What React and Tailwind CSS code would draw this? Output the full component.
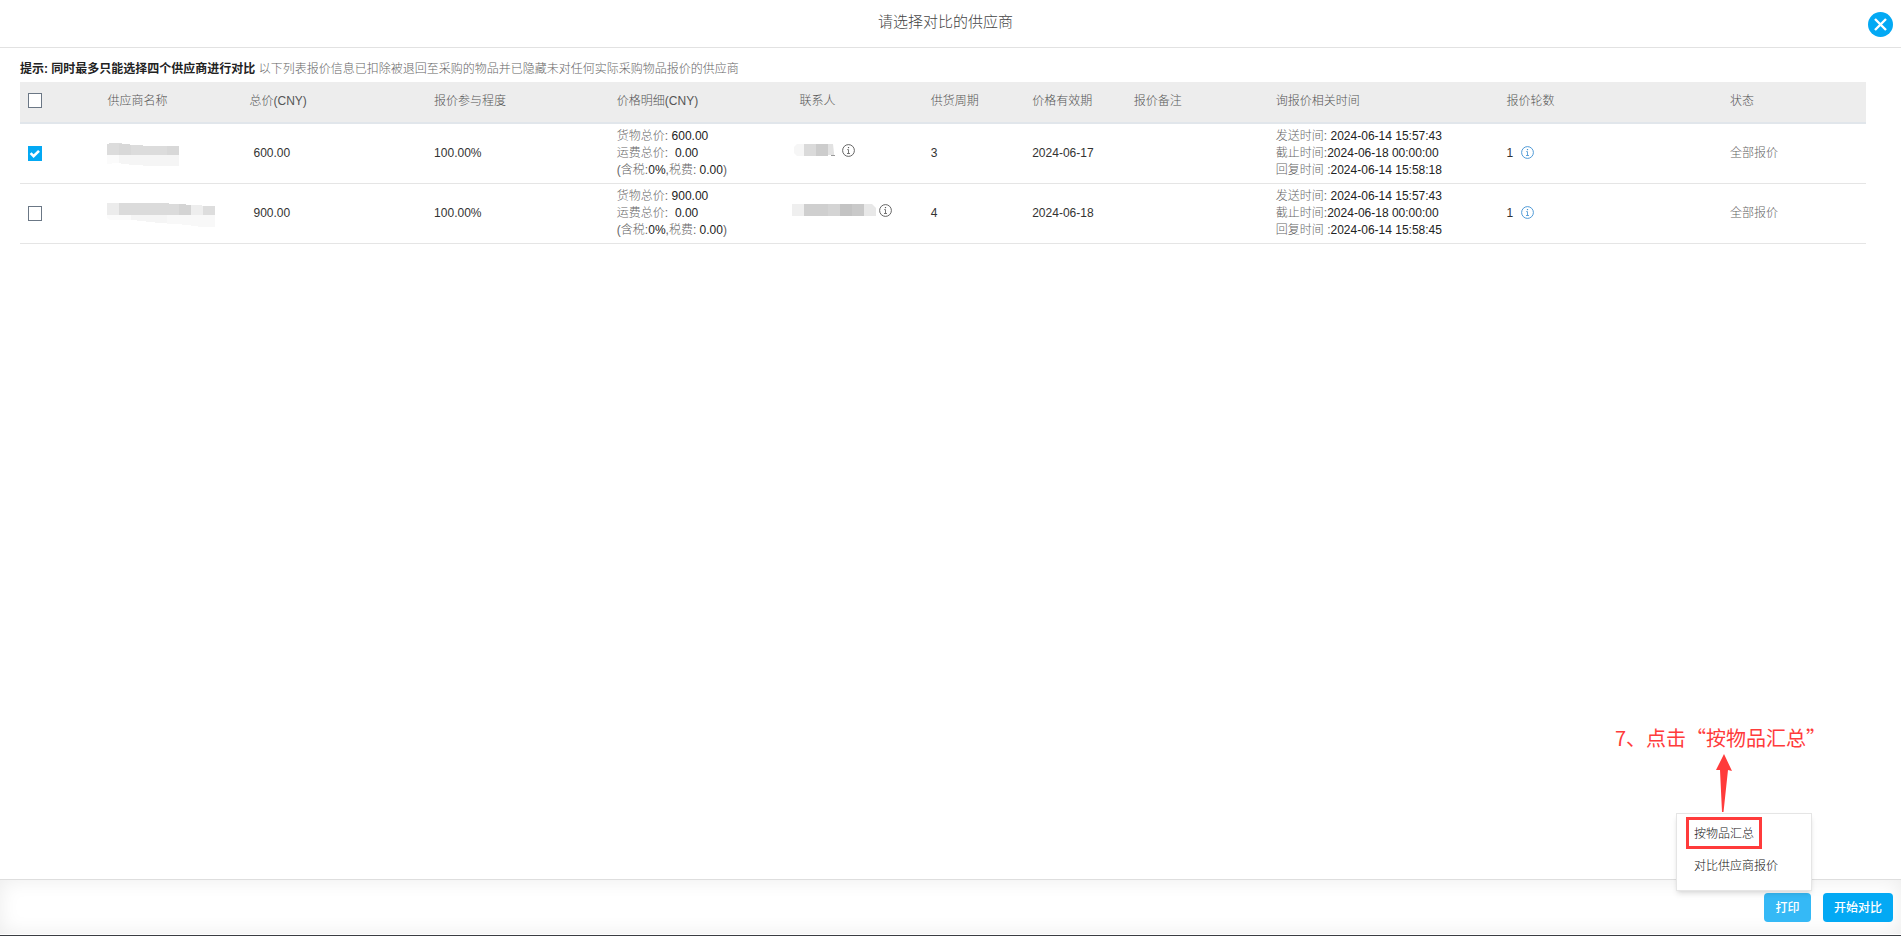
import { useState } from "react";

const columns = [
  { label: "供应商名称", width: "w-[7.7%]" },
  { label: "总价(CNY)", width: "w-[10%]" },
  { label: "报价参与程度", width: "w-[9.9%]" },
  { label: "价格明细(CNY)", width: "w-[9.9%]" },
  { label: "联系人", width: "w-[7.1%]" },
  { label: "供货周期", width: "w-[5.5%]" },
  { label: "价格有效期", width: "w-[5.5%]" },
  { label: "报价备注", width: "w-[7.7%]" },
  { label: "询报价相关时间", width: "w-[12.5%]" },
  { label: "报价轮数", width: "w-[12.1%]" },
  { label: "状态", width: "w-[7.8%]" },
];

const NameMaskA = () => (
  <svg width="72" height="24" viewBox="0 0 72 24" aria-hidden="true">
    <path d="M0 1h2v-1h13v1h8v1h13v1h36v9H0z" fill="#dcdcdc" />
    <path d="M12 1h11v1h1v10H12zM60 3h12v9H60z" fill="#d8d8d8" />
    <path d="M12 12h60v11H36v-1H22v-1H14v-1h-2z" fill="#f5f5f5" />
    <path d="M0 12h12v8H5v1H0z" fill="#fbfbfb" />
  </svg>
);

const NameMaskB = () => (
  <svg width="108" height="24" viewBox="0 0 108 24" aria-hidden="true">
    <path d="M0 0h12v12H0z" fill="#ececec" />
    <path d="M12 0h50v1h10v11H12z" fill="#dbdbdb" />
    <path d="M72 1h7v1h5v10H72z" fill="#d4d4d4" />
    <path d="M84 2h11v1h1v9H84z" fill="#eeeeee" />
    <path d="M96 3h12v9H96z" fill="#dddddd" />
    <path d="M0 12h24v5H3l-3-2z" fill="#fbfbfb" />
    <path d="M24 12h36v8H48v-1h-9v-1h-9v-1h-6z" fill="#f5f5f5" />
    <path d="M60 12h48v12H91v-1h-7v-1h-9v-1H60z" fill="#f8f8f8" />
  </svg>
);

const ContactMaskA = () => (
  <svg width="47" height="12" viewBox="-2 0 47 12" aria-hidden="true">
    <path d="M3 0h7v12H3L0 9V3z" fill="#f6f6f6" />
    <path d="M10 0h12v12H10z" fill="#dadada" />
    <path d="M22 0h12v12H22z" fill="#cccccc" />
    <path d="M34 0h5l1 9v2h-6z" fill="#e2e2e2" />
    <path d="M37 11h4v1h-4z" fill="#999999" />
  </svg>
);

const ContactMaskB = () => (
  <svg width="84" height="12" viewBox="0 0 84 12" aria-hidden="true">
    <path d="M0 0h12v12H0z" fill="#efefef" />
    <path d="M12 0h24v12H12z" fill="#cfcfcf" />
    <path d="M36 0h12v12H36z" fill="#d4d4d4" />
    <path d="M48 0h12v12H48z" fill="#c3c3c3" />
    <path d="M60 0h12v12H60z" fill="#c9c9c9" />
    <path d="M72 0h8l4 4v8H72z" fill="#e8e8e8" />
  </svg>
);

const suppliers = [
  {
    id: 1,
    NameMask: NameMaskA,
    ContactMask: ContactMaskA,
    total: "600.00",
    cycle: "3",
    validUntil: "2024-06-17",
    repliedAt: "2024-06-14 15:58:18",
  },
  {
    id: 2,
    NameMask: NameMaskB,
    ContactMask: ContactMaskB,
    total: "900.00",
    cycle: "4",
    validUntil: "2024-06-18",
    repliedAt: "2024-06-14 15:58:45",
  },
];

const InfoIcon = ({ className }) => (
  <svg width="13" height="13" viewBox="0 0 13 13" fill="none" stroke="currentColor" className={className} aria-hidden="true">
    <circle cx="6.5" cy="6.5" r="5.9" strokeWidth="0.9" />
    <path d="M5.2 5.6h1.3v3.700M5 9.500h3" strokeWidth="0.8" />
    <path d="M5.9 3.6h1.2" strokeWidth="1.1" />
  </svg>
);

const Checkbox = ({ label, checked, onChange }) => (
  <label className="relative block h-[15px] w-[14px]">
    <input
      type="checkbox"
      aria-label={label}
      checked={checked}
      onChange={onChange}
      className="peer block h-[15px] w-[14px] appearance-none border border-[#6b7785] bg-white checked:border-[#03a9f4] checked:bg-[#03a9f4]"
    />
    <svg
      viewBox="0 0 14 15"
      className="pointer-events-none absolute inset-0 hidden peer-checked:block"
      fill="none"
      stroke="white"
      strokeWidth="2.6"
      aria-hidden="true"
    >
      <path d="M2.6 7.2l3 3 5.4-5.4" />
    </svg>
  </label>
);

const Value = ({ children }) => <span className="text-[#222]">{children}</span>;

const App = () => {
  const [selected, setSelected] = useState([1]);

  const toggle = (id) =>
    setSelected((prev) => (prev.includes(id) ? prev.filter((x) => x !== id) : [...prev, id]));

  const allSelected = selected.length === suppliers.length;

  return (
    <div className="flex min-h-screen flex-col bg-white font-['Liberation_Sans','Noto_Sans_CJK_SC',sans-serif] text-xs font-light text-[#666]">
      {/* Title bar */}
      <header className="relative flex h-12 items-center justify-center border-b border-[#e2e2e2] pr-2.5 pb-1">
        <h1 className="text-[15px] leading-6 text-[#444]">请选择对比的供应商</h1>
        <button
          type="button"
          aria-label="关闭"
          className="absolute top-3 right-2 flex size-[25px] items-center justify-center rounded-full bg-[#03a9f4]"
        >
          <svg width="13" height="13" viewBox="0 0 13 13" stroke="white" strokeWidth="2.4" aria-hidden="true">
            <path d="M1 1l11 11M12 1L1 12" />
          </svg>
        </button>
      </header>

      <main className="flex-1 pt-3 pr-[35px] pl-5">
        <p className="pb-1 leading-[18px]">
          <strong className="font-bold text-[#222]">提示: 同时最多只能选择四个供应商进行对比</strong>{" "}
          以下列表报价信息已扣除被退回至采购的物品并已隐藏未对任何实际采购物品报价的供应商
        </p>

        <table className="w-full table-fixed border-collapse text-left leading-[17px]">
          <thead>
            <tr className="h-[41px] border-b-2 border-[#e1e6eb] bg-[#ededed] text-[#555]">
              <th className="w-[4.3%] px-2 pb-1">
                <Checkbox
                  label="全选"
                  checked={allSelected}
                  onChange={() => setSelected(allSelected ? [] : suppliers.map((s) => s.id))}
                />
              </th>
              {columns.map((col) => (
                <th key={col.label} className={`${col.width} px-2 pb-0.5 font-light`}>
                  {col.label}
                </th>
              ))}
            </tr>
          </thead>
          <tbody>
            {suppliers.map((s) => (
              <tr key={s.id} className="h-[60px] border-b border-[#e5e5e5]">
                <td className="px-2">
                  <Checkbox label={`供应商 ${s.id}`} checked={selected.includes(s.id)} onChange={() => toggle(s.id)} />
                </td>
                <td className="px-2 pt-1">
                  <s.NameMask />
                </td>
                <td className="px-3 text-[#333]">{s.total}</td>
                <td className="px-2 text-[#333]">100.00%</td>
                <td className="px-2">
                  货物总价: <Value>{s.total}</Value>
                  <br />
                  运费总价: &nbsp;<Value>0.00</Value>
                  <br />(含税:<Value>0%</Value>,税费: <Value>0.00</Value>)
                </td>
                <td className="pb-1.5">
                  <div className="flex items-center gap-[3px]">
                    <s.ContactMask />
                    <InfoIcon className="text-[#555]" />
                  </div>
                </td>
                <td className="px-2 text-[#333]">{s.cycle}</td>
                <td className="px-2 text-[#333]">{s.validUntil}</td>
                <td className="px-2" />
                <td className="px-2">
                  发送时间: <Value>2024-06-14 15:57:43</Value>
                  <br />
                  截止时间:<Value>2024-06-18 00:00:00</Value>
                  <br />
                  回复时间 :<Value>{s.repliedAt}</Value>
                </td>
                <td className="px-2">
                  <div className="flex items-center gap-2 text-[#333]">
                    1 <InfoIcon className="mb-0.5 text-[#3d8fd1]" />
                  </div>
                </td>
                <td className="px-2">全部报价</td>
              </tr>
            ))}
          </tbody>
        </table>
      </main>

      {/* Action bar */}
      <footer className="border-b border-[#3a3d42]">
        <div className="mb-px flex justify-end gap-3 border-t border-[#dedede] px-2 pt-[13px] pb-3 shadow-[inset_0_0_20px_rgba(0,0,0,0.08)]">
          <div className="relative">
            <button type="button" className="h-[29px] w-[47px] rounded bg-[#35b9f6] font-medium text-white">
              打印
            </button>

            <div className="absolute -right-px bottom-full mb-0.5 h-[78px] w-[136px] border border-[#e5e5e5] bg-white px-[9px] py-[3px] text-[#111] shadow-md">
              {/* Step callout */}
              <div className="absolute right-[-24px] bottom-full w-[220px] font-['Noto_Sans_CJK_SC',sans-serif] font-normal text-[#ff3b3b]">
                <p className="pb-0.5 text-xl leading-7 whitespace-nowrap">7、点击“按物品汇总”</p>
                <svg width="16" height="58" viewBox="0 0 16 58" className="mb-0.5 ml-[101px]" fill="currentColor" aria-hidden="true">
                  <path d="M8 0l8 17-4-1L7.500 58h-1.500L4 16l-4 0z" />
                </svg>
              </div>
              <button type="button" className="block h-8 border-3 border-[#ff3b3b] px-[5px] pt-0.5 whitespace-nowrap">
                按物品汇总
              </button>
              <button type="button" className="block h-8 px-2 pt-0.5 whitespace-nowrap">
                对比供应商报价
              </button>
            </div>
          </div>
          <button type="button" className="h-[29px] rounded bg-[#03a9f4] px-[11px] font-medium text-white">
            开始对比
          </button>
        </div>
      </footer>
    </div>
  );
};

export default App;
